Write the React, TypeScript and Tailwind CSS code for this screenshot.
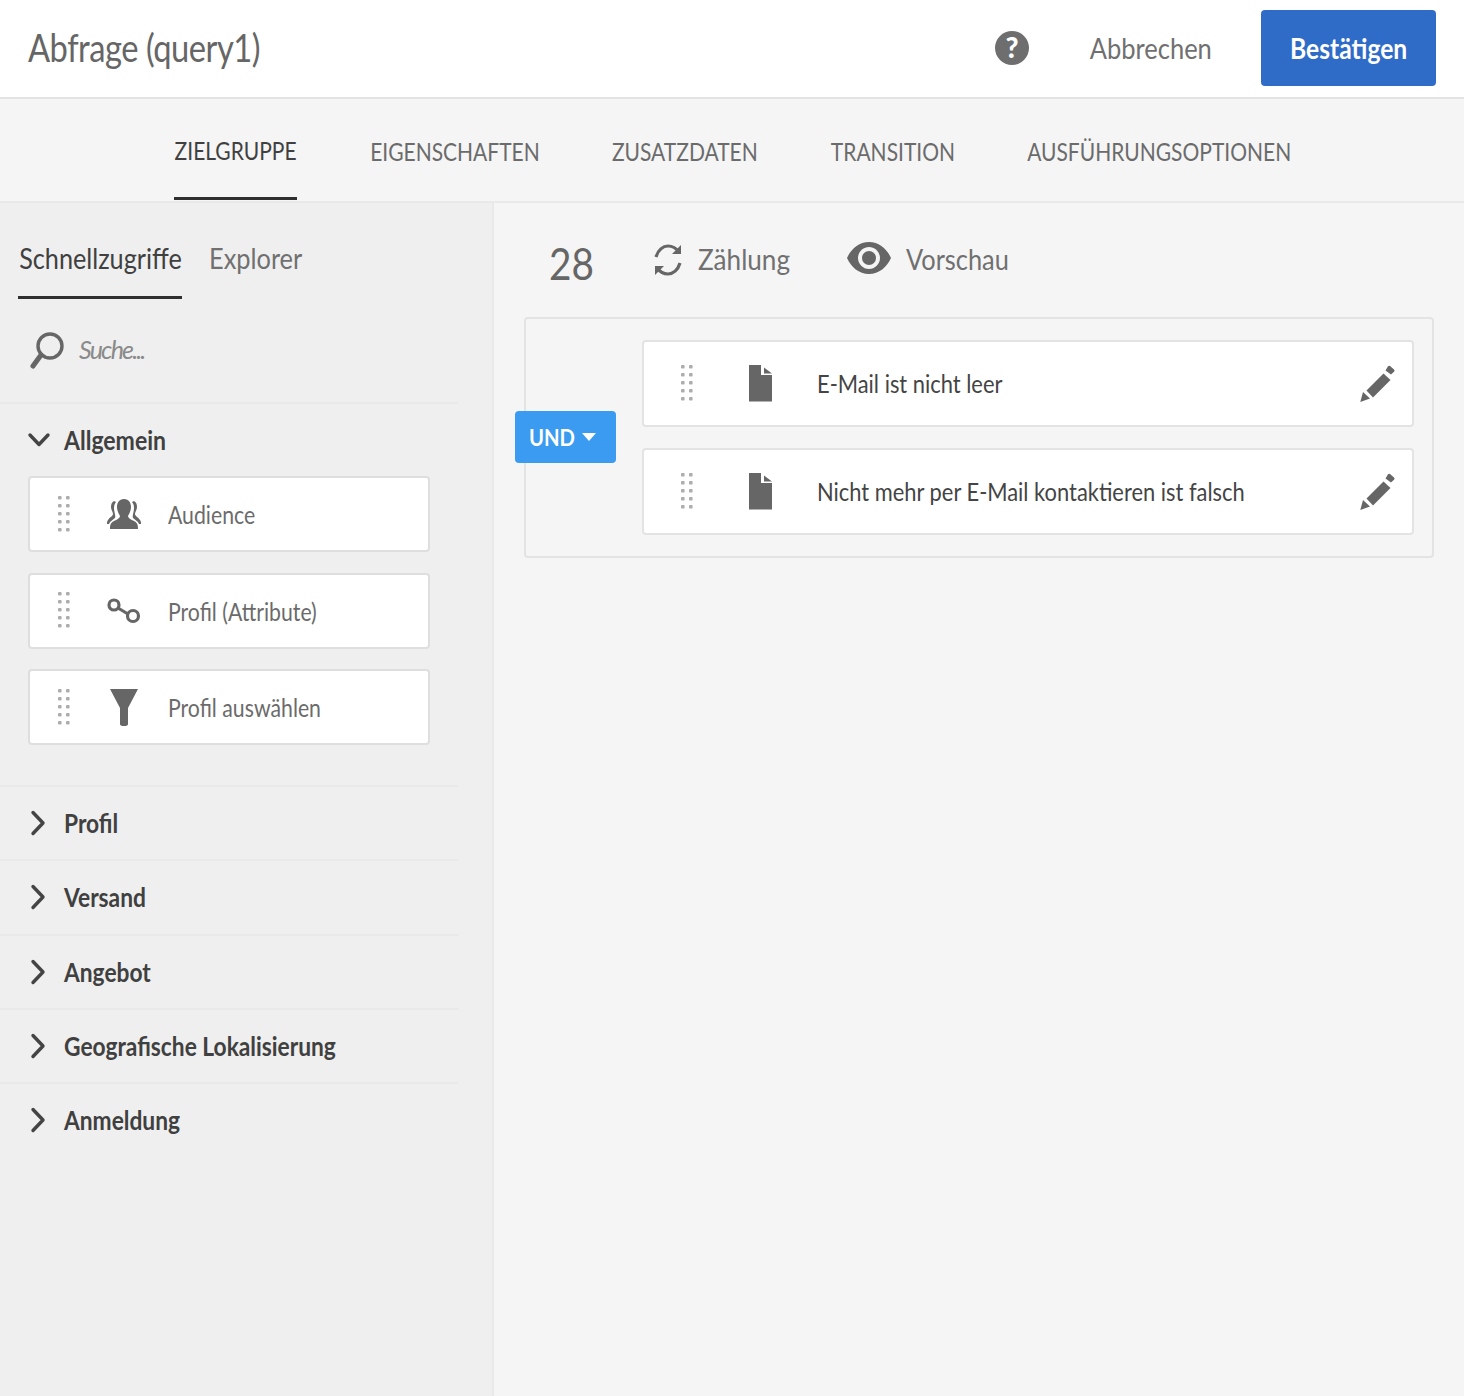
import React from "react";

function Grip() {
  return (
    <svg width="13" height="37" viewBox="0 0 13 37" className="shrink-0" fill="#adadad">
      {[0, 8, 16, 24, 32].map((y) => (
        <g key={y}>
          <rect x="0" y={y} width="3.6" height="3.6" rx="1" />
          <rect x="8" y={y} width="3.6" height="3.6" rx="1" />
        </g>
      ))}
    </svg>
  );
}

function Doc() {
  return (
    <svg width="24" height="37" viewBox="0 0 24 37" fill="#666">
      <path d="M0 0H12V10H23V36.5H0Z" />
      <path d="M15 2.5L23 8.5H15Z" />
    </svg>
  );
}

function Pencil() {
  return (
    <svg width="36" height="38" viewBox="0 0 36 38" fill="#666">
      <path d="M0.3 37L3 27L10 33.5Z" />
      <path d="M6.5 25.5L23.5 8.5L30.5 15L13 32.5Z" />
      <path d="M25.5 5.5L28 1.2Q29 0.4 30 1L34 4.6Q35 5.6 34.2 6.6L31 9.6Z" />
    </svg>
  );
}

function Chevron({ open }: { open?: boolean }) {
  return open ? (
    <svg width="24" height="16" viewBox="0 0 24 16" fill="none" stroke="#444" strokeWidth="3.4" strokeLinecap="round" strokeLinejoin="round">
      <path d="M3 3L12 12.5L21 3" />
    </svg>
  ) : (
    <svg width="16" height="26" viewBox="0 0 16 26" fill="none" stroke="#444" strokeWidth="3.4" strokeLinecap="round" strokeLinejoin="round">
      <path d="M3 2.5L13 13L3 23.5" />
    </svg>
  );
}

function AudienceIcon() {
  return (
    <svg width="34" height="30" viewBox="0 0 34 30" fill="#666">
      <path d="M17 0C22 0 24 4 24 8C24 12 22 15 21 17C21 19 23 20 27 22C31 24 31 27 31 30H3C3 27 3 24 7 22C11 20 13 19 13 17C12 15 10 12 10 8C10 4 12 0 17 0Z" />
      <path d="M7 2C5 3 4 5 4 8C4 11 6 13 6 15C6 17 3 18 1 21C0 22 0 24 0 25H2C3 22 6 21 8 19C9 17 7 13 7 9C7 6 8 4 9 3Z" />
      <path d="M27 2C29 3 30 5 30 8C30 11 28 13 28 15C28 17 31 18 33 21C34 22 34 24 34 25H32C31 22 28 21 26 19C25 17 27 13 27 9C27 6 26 4 25 3Z" />
    </svg>
  );
}

function LinkIcon() {
  return (
    <svg width="34" height="26" viewBox="0 0 34 26" fill="none" stroke="#666" strokeWidth="3.2">
      <circle cx="7" cy="7" r="5" />
      <circle cx="26" cy="18" r="5.5" />
      <path d="M11 10L21 16" />
    </svg>
  );
}

function FunnelIcon() {
  return (
    <svg width="28" height="37" viewBox="0 0 28 37" fill="#666">
      <path d="M0 0H28L18 19V35Q18 37 14 37Q10 37 10 35V19Z" />
    </svg>
  );
}

function Card({ icon, label }: { icon: React.ReactNode; label: string }) {
  return (
    <div className="flex h-[76px] w-[402px] items-center rounded-[4px] border-2 border-[#dedede] bg-white pl-[28px]">
      <Grip />
      <div className="ml-[35px] flex w-[36px] justify-center">{icon}</div>
      <span className="ml-[26px] inline-block origin-left scale-x-[0.85] whitespace-nowrap pt-[2px] text-[25px] text-[#6b6b6b]">{label}</span>
    </div>
  );
}

function Section({ label }: { label: string }) {
  return (
    <div className="flex h-[74.3px] items-center border-t-2 border-[#e9e9e9] pl-[30px]">
      <div className="flex w-[34px]"><Chevron /></div>
      <span className="inline-block origin-left scale-x-[0.875] whitespace-nowrap pt-[1px] text-[26px] font-bold text-[#404040]">{label}</span>
    </div>
  );
}

function Rule({ label }: { label: string }) {
  return (
    <div className="flex h-[87px] items-center rounded-[4px] border-2 border-[#e3e3e3] bg-white pl-[37px] pr-[16px]">
      <Grip />
      <div className="ml-[55px] flex w-[24px]"><Doc /></div>
      <span className="ml-[44px] inline-block flex-1 origin-left scale-x-[0.875] whitespace-nowrap text-[25px] text-[#444]">{label}</span>
      <Pencil />
    </div>
  );
}

function Tab({ label, width, active }: { label: string; width: string; active?: boolean }) {
  return (
    <div className={`flex h-[101px] items-center justify-center ${width} ${active ? "border-b-[3px] border-[#2f2f2f] pt-[6px] text-[#404040]" : "pt-[5px] text-[#6b6b6b]"}`}>
      <span className="inline-block scale-x-[0.84] whitespace-nowrap text-[25px]">{label}</span>
    </div>
  );
}

export default function App() {
  return (
    <div className="flex h-[1396px] w-[1464px] flex-col overflow-hidden bg-[#f5f5f5] text-[#666] [font-family:Lato,'Noto_Sans',sans-serif]">
      <header className="flex h-[99px] shrink-0 items-center border-b-2 border-[#e3e3e3] bg-white pb-[2px] pl-[28px] pr-[28px]">
        <h1 className="flex-1 origin-left scale-x-[0.86] whitespace-nowrap text-[38px] font-normal tracking-[-0.56px] text-[#666]">Abfrage (query1)</h1>
        <svg width="34" height="36" viewBox="0 0 34 36" className="mr-[61px]">
          <circle cx="17" cy="18" r="17" fill="#6e6e6e" />
          <text x="17" y="28" textAnchor="middle" fill="#fff" fontSize="28" fontWeight="900" fontFamily="Lato">?</text>
        </svg>
        <div className="mr-[49px] flex w-[122px] justify-end">
          <span className="inline-block origin-right scale-x-[0.88] whitespace-nowrap text-[29px] text-[#707070]">Abbrechen</span>
        </div>
        <button className="flex h-[76px] w-[175px] items-center justify-center rounded-[4px] bg-[#2f6cc8] text-white">
          <span className="inline-block scale-x-[0.88] whitespace-nowrap text-[28px] font-bold">Bestätigen</span>
        </button>
      </header>

      <nav className="flex h-[104px] shrink-0 gap-[73px] border-b-2 border-[#e9e9e9] pl-[174px]">
        <Tab label="ZIELGRUPPE" width="w-[123px]" active />
        <Tab label="EIGENSCHAFTEN" width="w-[169px]" />
        <Tab label="ZUSATZDATEN" width="w-[146px]" />
        <Tab label="TRANSITION" width="w-[124px]" />
        <Tab label="AUSFÜHRUNGSOPTIONEN" width="w-[262px]" />
      </nav>

      <div className="flex min-h-0 flex-1">
        <aside className="w-[494px] shrink-0 border-r-2 border-[#e9e9e9] bg-[#efefef]">
          <div className="w-[458px]">
            <div className="flex h-[96px] pl-[18px]">
              <div className="flex h-[96px] w-[164px] items-center justify-center border-b-[3px] border-[#2f2f2f] pt-[17px] text-[#404040]">
                <span className="inline-block scale-x-[0.87] whitespace-nowrap text-[29px]">Schnellzugriffe</span>
              </div>
              <div className="ml-[27px] flex h-[95px] items-center pt-[14px]">
                <span className="inline-block origin-left scale-x-[0.875] whitespace-nowrap text-[29px] text-[#707070]">Explorer</span>
              </div>
            </div>
            <div className="flex h-[105px] items-center border-b-2 border-[#e9e9e9] pb-[2px] pl-[29px]">
              <svg width="36" height="38" viewBox="0 0 36 38" fill="none" stroke="#666" strokeWidth="3.4" strokeLinecap="round">
                <circle cx="21" cy="15" r="12" />
                <path d="M12 24L4 35" strokeWidth="5" />
              </svg>
              <span className="ml-[14px] text-[25px] italic tracking-[-1.8px] text-[#8a8a8a]">Suche...</span>
            </div>
            <div className="flex h-[72px] items-center pl-[27px]">
              <div className="flex w-[37px]"><Chevron open /></div>
              <span className="inline-block origin-left scale-x-[0.885] whitespace-nowrap pt-[1px] text-[26px] font-bold text-[#404040]">Allgemein</span>
            </div>
            <div className="flex flex-col gap-[20.5px] pl-[28px]">
              <Card icon={<AudienceIcon />} label="Audience" />
              <Card icon={<LinkIcon />} label="Profil (Attribute)" />
              <Card icon={<FunnelIcon />} label="Profil auswählen" />
            </div>
            <div className="mt-[40px]">
              <Section label="Profil" />
              <Section label="Versand" />
              <Section label="Angebot" />
              <Section label="Geografische Lokalisierung" />
              <Section label="Anmeldung" />
            </div>
          </div>
        </aside>

        <main className="min-w-0 flex-1 pl-[30px] pr-[30px]">
          <div className="flex h-[114px] items-center">
            <span className="ml-[25px] inline-block w-[103px] origin-left scale-x-[0.88] pt-[6px] text-[44px] text-[#666]">28</span>
            <svg width="32" height="34" viewBox="0 0 32 34" fill="none" stroke="#666" strokeWidth="3.2" className="-mt-[1px]">
              <path d="M4 14C6 7 11 3 16 3C21 3 24 5 27 9" />
              <path d="M28 20C26 27 21 31 16 31C11 31 8 29 5 25" />
              <path d="M29 2V11H20" fill="#666" stroke="none" />
              <path d="M3 32V23H12" fill="#666" stroke="none" />
            </svg>
            <span className="-mt-[3px] ml-[14px] inline-block w-[93px] origin-left scale-x-[0.9] whitespace-nowrap text-[29px] text-[#707070]">Zählung</span>
            <svg width="44" height="34" viewBox="0 0 44 34" className="-mt-[5px] ml-[56px]">
              <path fillRule="evenodd" fill="#666" d="M22 1C32 1 40 8 44 17C40 26 32 33 22 33C12 33 4 26 0 17C4 8 12 1 22 1ZM22 6C16 6 11 11 11 17C11 23 16 28 22 28C28 28 33 23 33 17C33 11 28 6 22 6Z" />
              <circle cx="22" cy="17" r="7" fill="#666" />
            </svg>
            <span className="-mt-[3px] ml-[15px] inline-block origin-left scale-x-[0.875] whitespace-nowrap text-[29px] text-[#707070]">Vorschau</span>
          </div>

          <div className="relative flex flex-col gap-[21px] rounded-[4px] border-2 border-[#e3e3e3] py-[21px] pl-[116px] pr-[18px]">
            <Rule label="E-Mail ist nicht leer" />
            <Rule label="Nicht mehr per E-Mail kontaktieren ist falsch" />
            <button className="absolute left-[-11px] top-[92px] flex h-[52px] w-[101px] items-center rounded-[4px] bg-[#3b9bf0] pl-[14px] text-white">
              <span className="inline-block w-[46px] origin-left scale-x-[0.88] text-left text-[23px] font-bold">UND</span>
              <svg width="14" height="9" viewBox="0 0 14 9" fill="#fff" className="ml-[7px]"><path d="M0 0H14L7 8Z" /></svg>
            </button>
          </div>
        </main>
      </div>
    </div>
  );
}
